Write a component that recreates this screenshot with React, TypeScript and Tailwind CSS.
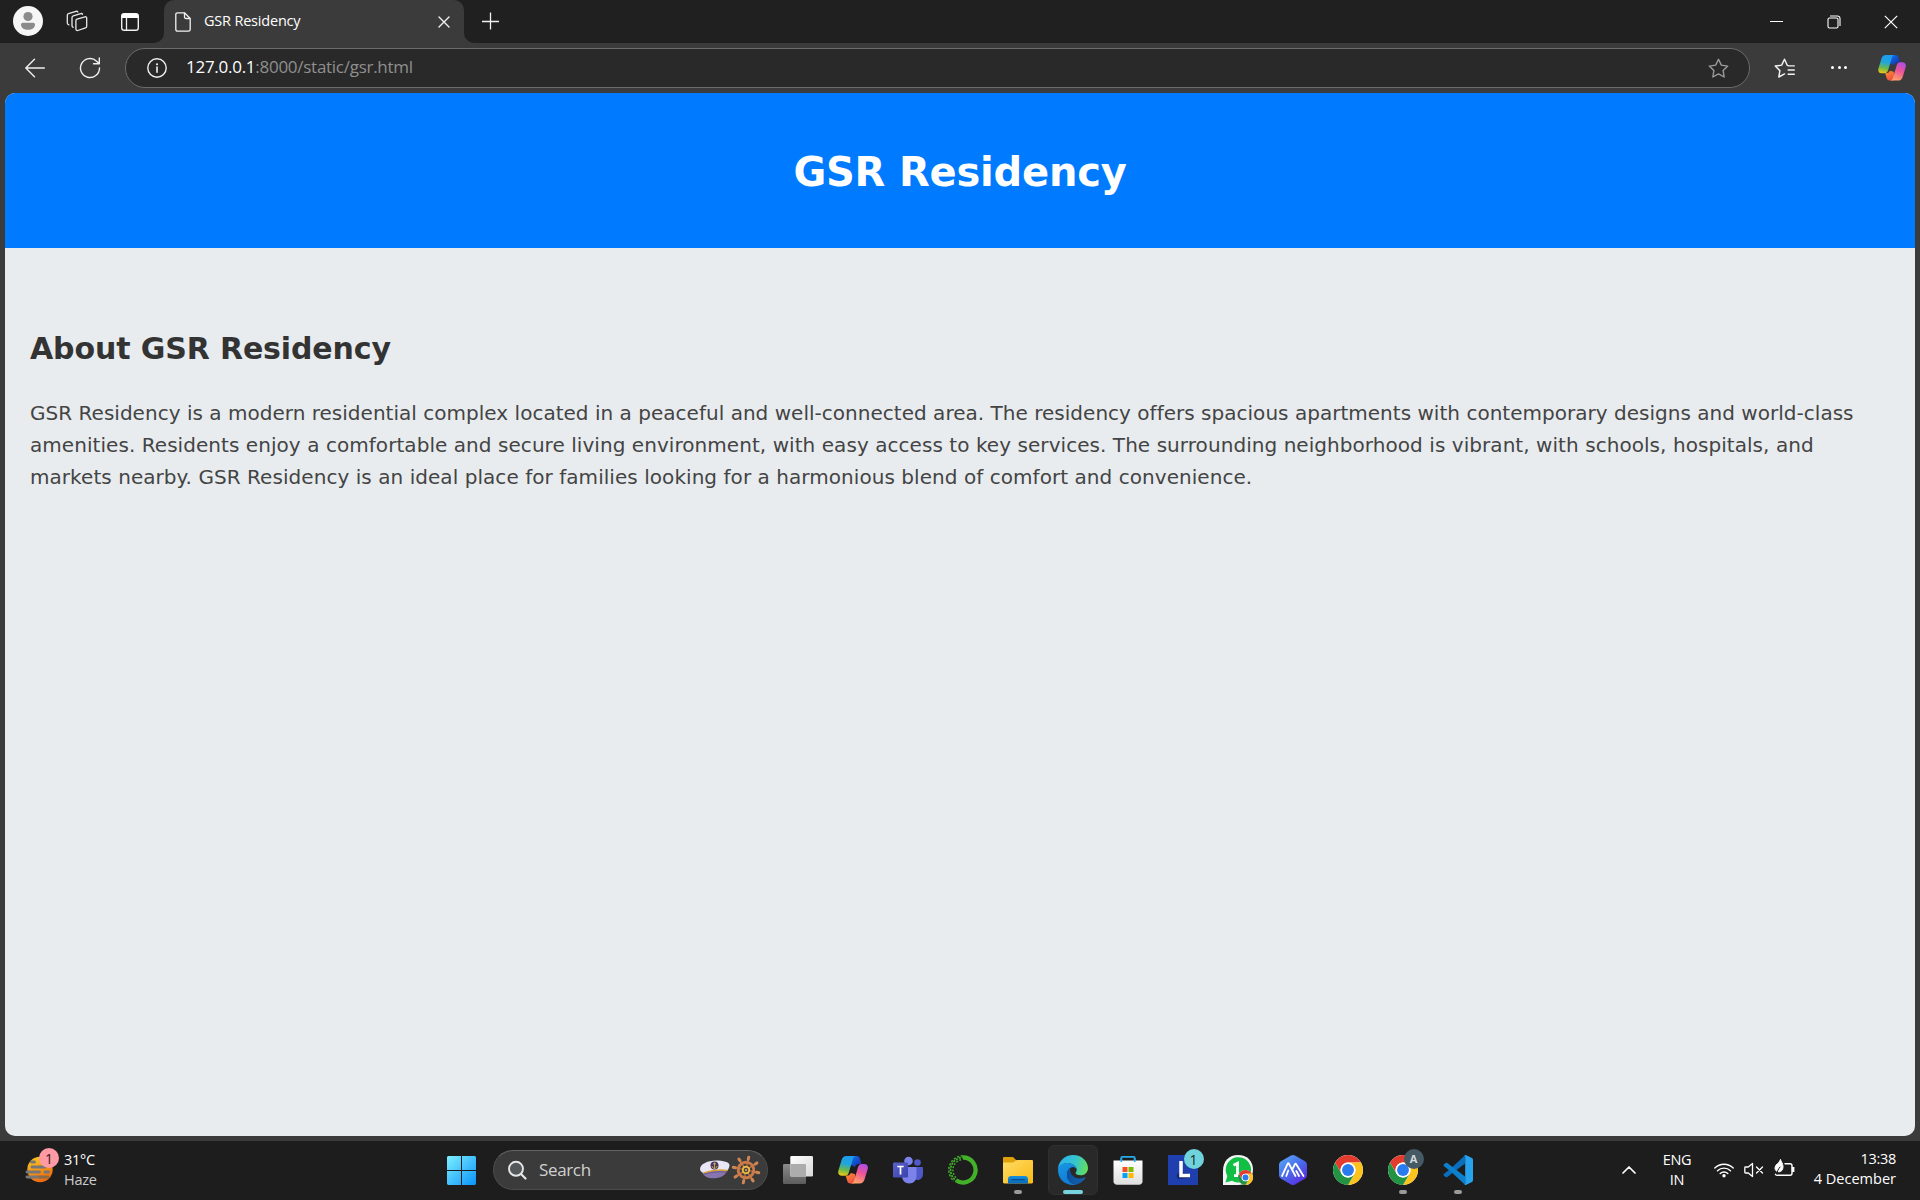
import React from "react";

type IconProps = { className?: string };

function Copilot({ className = "", id }: IconProps & { id: string }) {
  return (
    <svg viewBox="0 0 30 28" className={className} fill="none">
      <defs>
        <linearGradient id={id + "a"} x1="9" y1="0" x2="5" y2="20" gradientUnits="userSpaceOnUse">
          <stop offset="0" stopColor="#1c9bf0" />
          <stop offset=".4" stopColor="#22a6d8" />
          <stop offset=".7" stopColor="#6cb84a" />
          <stop offset="1" stopColor="#f8c912" />
        </linearGradient>
        <linearGradient id={id + "b"} x1="26" y1="7" x2="17" y2="28" gradientUnits="userSpaceOnUse">
          <stop offset="0" stopColor="#a64df0" />
          <stop offset=".45" stopColor="#ee5397" />
          <stop offset="1" stopColor="#ffae62" />
        </linearGradient>
        <linearGradient id={id + "c"} x1="15" y1="0" x2="22" y2="8" gradientUnits="userSpaceOnUse">
          <stop offset="0" stopColor="#0f6fe8" />
          <stop offset="1" stopColor="#1737b8" />
        </linearGradient>
        <linearGradient id={id + "d"} x1="8" y1="19" x2="14" y2="28" gradientUnits="userSpaceOnUse">
          <stop offset="0" stopColor="#f98a2c" />
          <stop offset="1" stopColor="#ef4a4a" />
        </linearGradient>
      </defs>
      <path d="M14 0h4.500c2 0 3 1 3.500 2.700L23.500 8h-2c-2.600 0-3.500.6-4.500 3L13 9l-1-7z" fill={`url(#${id}c)`} />
      <path d="M16 27.500h-3.500c-2 0-2.800-1-3.300-2.700L7.600 19.500H9c2 0 3-.6 3.700-2.500L17 18l1 8z" fill={`url(#${id}d)`} />
      <path d="M8.500 0H18c-2 .3-2.700 1.400-3.200 3.200l-4 13.300c-.7 2.200-1.800 3.200-4 3.200H4C1 19.700-.4 17.500.4 14.600L3.600 4C4.500 1.300 5.800 0 8.500 0z" fill={`url(#${id}a)`} />
      <path d="M21.500 27.500H13c2-.3 2.700-1.400 3.200-3.200l3.800-13c.7-2.200 1.700-3.400 4-3.400h2.200c3 0 4.300 2.300 3.500 5.200l-3.200 10.500c-.9 2.700-2.300 3.900-5 3.900z" fill={`url(#${id}b)`} />
    </svg>
  );
}

function Chrome({ className = "" }: IconProps) {
  return (
    <svg viewBox="0 0 48 48" className={className}>
      <circle cx="24" cy="24" r="24" fill="#fff" />
      <path d="M3.220 12A24 24 0 0 1 44.780 12H24a12 12 0 0 0-10.390 18z" fill="#e33b2e" />
      <path d="M44.780 12A24 24 0 0 1 24 48l10.390-18A12 12 0 0 0 24 12z" fill="#fcc31e" />
      <path d="M24 48A24 24 0 0 1 3.220 12l10.390 18a12 12 0 0 0 20.780 0z" fill="#229342" />
      <circle cx="24" cy="24" r="12" fill="#fff" />
      <circle cx="24" cy="24" r="9.500" fill="#2a7af0" />
    </svg>
  );
}

function Workspaces() {
  return (
    <svg viewBox="0 0 22 22" className="size-[22px]" fill="none" stroke="#e8e8e8" strokeWidth="1.300" strokeLinejoin="round" strokeLinecap="round">
      <path d="M11 9.200l8-2.400c1-.2 1.700.3 1.700 1.300v8.200c0 .8-.4 1.400-1.200 1.600l-7.700 2.600c-1 .3-1.900-.3-1.900-1.400v-8.300c0-.8.400-1.400 1.100-1.600z" />
      <path d="M7.200 17.300c-.7-.3-1.200-.8-1.200-1.500V7.500c0-.8.400-1.400 1.200-1.700l7.600-2.200c.8-.2 1.500.1 1.700.8" />
      <path d="M2.900 14.800c-.9-.2-1.600-.8-1.600-1.700V5.400c0-.9.400-1.500 1.200-1.700L10 1.300c.9-.2 1.500.1 1.800.8" />
    </svg>
  );
}

function TabActions() {
  return (
    <svg viewBox="0 0 20 20" className="size-5" fill="none">
      <rect x="1.700" y="1.700" width="16.600" height="16.600" rx="2.600" stroke="#f0f0f0" strokeWidth="1.400" />
      <path d="M1.500 6V4a2.600 2.600 0 0 1 2.600-2.600h11.800A2.600 2.600 0 0 1 18.500 4v2z" fill="#fff" />
      <path d="M6.500 6v12" stroke="#f0f0f0" strokeWidth="1.300" />
    </svg>
  );
}

const STAR = "M10 1.200l2.700 5.600 6.100.9-4.400 4.300 1 6.100-5.400-2.900-5.400 2.900 1-6.100L1.200 7.700l6.100-.9z";

function TitleBar() {
  return (
    <div className="flex h-[43px] shrink-0 items-start bg-[#202020]">
      <div className="flex h-[42px] w-[154px] items-center">
        <svg viewBox="0 0 30 30" className="ml-[13px] size-[30px]">
          <circle cx="15" cy="15" r="15" fill="#f6f6f6" />
          <circle cx="15" cy="10.500" r="4.600" fill="#8b8b8b" />
          <path d="M8 18.500a1.800 1.800 0 0 1 1.800-1.800h10.400a1.800 1.800 0 0 1 1.800 1.800c0 3.500-3 5.300-7 5.300s-7-1.800-7-5.300z" fill="#8b8b8b" />
        </svg>
        <div className="ml-[23px]"><Workspaces /></div>
        <div className="mt-px ml-8"><TabActions /></div>
      </div>
      <div className="mt-[33px] size-[10px] bg-[#3b3b3b]">
        <div className="size-[10px] rounded-br-[10px] bg-[#202020]" />
      </div>
      <div className="flex h-[43px] w-[300px] items-center rounded-t-[10px] bg-[#3b3b3b]">
        <svg viewBox="0 0 16 20" className="ml-[11px] h-5 w-4 shrink-0" fill="none" stroke="#f2f2f2" strokeWidth="1.300" strokeLinejoin="round">
          <path d="M2.600.8h6.900L15.200 6.500v10.900c0 1-.8 1.800-1.800 1.800H2.600c-1 0-1.800-.8-1.800-1.800V2.600c0-1 .8-1.800 1.800-1.800z" />
          <path d="M9.500.8v4.100c0 1 .6 1.600 1.600 1.600h4.100" />
        </svg>
        <span className="ml-[13px] w-[234px] shrink-0 pb-px text-[14.500px] leading-5 tracking-[-0.200px] whitespace-nowrap text-white">GSR Residency</span>
        <svg viewBox="0 0 12 12" className="mt-px size-3 shrink-0" stroke="#f2f2f2" strokeWidth="1.400" strokeLinecap="round">
          <path d="M1 1l10 10M11 1L1 11" />
        </svg>
      </div>
      <div className="mt-[33px] size-[10px] bg-[#3b3b3b]">
        <div className="size-[10px] rounded-bl-[10px] bg-[#202020]" />
      </div>
      <svg viewBox="0 0 18 18" className="mt-3 ml-2 size-[18px]" stroke="#f2f2f2" strokeWidth="1.300">
        <path d="M8.500 .5v17M0 9.500h17" />
      </svg>
      <div className="mr-px ml-auto flex h-[43px] items-center">
        <div className="flex w-[57px] justify-center">
          <div className="h-px w-[13px] bg-white" />
        </div>
        <div className="flex w-[57px] justify-center">
          <svg viewBox="0 0 14 14" className="size-[14px]" fill="none" stroke="#fff" strokeWidth="1.100">
            <rect x="1" y="3" width="10" height="10" rx="1.500" />
            <path d="M3 1h7.500a2.500 2.500 0 0 1 2.500 2.500V11" />
          </svg>
        </div>
        <div className="flex w-[57px] justify-center">
          <svg viewBox="0 0 14 14" className="size-[14px]" stroke="#fff" strokeWidth="1.200">
            <path d="M.8.800l12.400 12.400M13.200.8L.8 13.200" />
          </svg>
        </div>
      </div>
    </div>
  );
}

function Toolbar() {
  return (
    <div className="flex h-[50px] shrink-0 items-center bg-[#3b3b3b]">
      <svg viewBox="0 0 20 20" className="-mt-px ml-[25px] size-5" fill="none" stroke="#f0f0f0" strokeWidth="1.400" strokeLinecap="round" strokeLinejoin="round">
        <path d="M19.300 10H.8M9.500 1.300L.8 10l8.700 8.700" />
      </svg>
      <svg viewBox="0 0 22 22" className="-mt-px ml-[34px] size-[22px]" fill="none" stroke="#f0f0f0" strokeWidth="1.400" strokeLinecap="round" strokeLinejoin="round">
        <path d="M20.500 11a9.500 9.500 0 1 1-2.900-6.800l2.500 2.300M20.300 1v5.700h-5.800" />
      </svg>
      <div className="ml-[24px] flex h-10 w-[1625px] items-center rounded-full border border-[#6b6b6b] bg-[#292929]">
        <svg viewBox="0 0 20 20" className="ml-[21px] size-5" fill="none">
          <circle cx="10" cy="10" r="9.200" stroke="#f0f0f0" strokeWidth="1.400" />
          <path d="M10 9v5.200" stroke="#fff" strokeWidth="1.500" strokeLinecap="round" />
          <circle cx="10" cy="6.200" r="1" fill="#fff" />
        </svg>
        <span className="ml-[19px] pb-[2px] text-[17px] leading-6 tracking-[-0.270px] whitespace-nowrap text-[#8f8f8f]">
          <span className="text-white">127.0.0.1</span>:8000/static/gsr.html
        </span>
        <svg viewBox="0 0 20 20" className="mr-[20px] ml-auto size-[21px]" fill="none" stroke="#9c9c9c" strokeWidth="1.300" strokeLinejoin="round">
          <path d={STAR} />
        </svg>
      </div>
      <svg viewBox="0 0 20 20" className="ml-6 size-[21px]" fill="none" stroke="#f2f2f2" strokeWidth="1.400" strokeLinejoin="round" strokeLinecap="round">
        <path d="M13 7l-.4-.1L10 1.200 7.300 6.800l-6.100.9L5.600 12l-1 6.100 5.400-2.900M13.700 7.500h5.600M13.500 11.500h5.800M13.500 15.500h5.800" />
      </svg>
      <div className="-mt-px ml-[36px] flex gap-[3.500px]">
        <div className="size-[3px] rounded-full bg-white" />
        <div className="size-[3px] rounded-full bg-white" />
        <div className="size-[3px] rounded-full bg-white" />
      </div>
      <Copilot id="cpt" className="ml-[31px] h-[26px] w-7" />
    </div>
  );
}

function SearchBox() {
  return (
    <div className="flex h-10 w-[275px] shrink-0 items-center rounded-full border border-[#4b4b4b] border-t-[#646464] bg-[#3b3b3b]">
      <svg viewBox="0 0 20 20" className="ml-[13px] size-5" fill="none">
        <circle cx="9" cy="8.800" r="7" fill="#55585a" stroke="#e4e6e8" strokeWidth="1.900" />
        <path d="M14 14l4.500 4.500" stroke="#e4e6e8" strokeWidth="2.200" strokeLinecap="round" />
      </svg>
      <span className="ml-[12px] text-[17px] leading-6 tracking-[-0.350px] text-[#d0d0d0]">Search</span>
      <svg viewBox="0 0 62 30" className="mr-[6px] ml-auto h-[30px] w-[62px]" fill="none">
        <path d="M3 17c7-2 17-3 25-2.500-.5 4.500-4 7.500-10 8.500C11 24 5 22.500 3 17z" fill="#8874ae" />
        <path d="M1 14C1 9 9 5.500 17 5.500c7 0 13.500 1.500 13.500 4.500 0 2-1 4-2 5.500-8-1-17 0-24 2.500C2.500 17 1 16 1 14z" fill="#e9e6f6" />
        <path d="M4.500 18c7-2.500 16-3.800 24-2.500" stroke="#dba536" strokeWidth="1.600" />
        <path d="M5 19.200c7-2.200 15-3 22.500-2" stroke="#6b5894" strokeWidth="1" />
        <circle cx="15.500" cy="10.500" r="4" fill="#453560" />
        <path d="M15.500 7.500v6M13 11c.3 3.300 4.700 3.300 5 0M14 8.800h3" stroke="#ddb047" strokeWidth=".9" />
        <g transform="translate(47 15) rotate(12)" stroke="#c0703f" strokeLinecap="round">
          <path d="M0-12.800V-7M0 7V12.800M-12.800 0H-7M7 0H12.800M-9-9L-5-5M5 5L9 9M9-9L5-5M-5 5L-9 9" strokeWidth="2" />
          <path d="M0-7V7M-7 0H7M-5-5L5 5M5-5L-5 5" strokeWidth="1.300" />
          <path d="M0-13v2M0 11v2M-13 0h2M11 0h2M-9.200-9.200l1.300 1.300M7.900 7.900l1.300 1.300M9.200-9.200L7.900-7.900M-7.900 7.900l-1.300 1.300" strokeWidth="3" stroke="#cd8654" />
          <circle r="7.800" strokeWidth="3" stroke="#c97a49" />
          <circle r="3.200" fill="#4a4036" stroke="#e9b949" strokeWidth="1.800" />
          <circle r="1" fill="#e9b949" stroke="none" />
        </g>
      </svg>
    </div>
  );
}

function Slot({ children, running, active }: { children: React.ReactNode; running?: boolean; active?: boolean }) {
  return (
    <div className="flex h-[50px] w-[55px] shrink-0 justify-center">
      <div className={active ? "relative flex w-[50px] justify-center rounded-md border border-[#303030] bg-[#292929] pt-[9px]" : "relative flex w-[50px] justify-center pt-[10px]"}>
        <div className="relative size-[30px]">{children}</div>
        {running && <div className="absolute bottom-[1px] h-1 w-2 rounded-full bg-[#9a9a9a]" />}
        {active && <div className="absolute bottom-0 h-1 w-5 rounded-full bg-[#76d2dc]" />}
      </div>
    </div>
  );
}

function Apps() {
  return (
    <div className="flex">
      <Slot>
        <svg viewBox="0 0 30 30" className="size-[30px]">
          <defs>
            <linearGradient id="tv" x1="0" y1="0" x2="1" y2="1"><stop stopColor="#fff" /><stop offset="1" stopColor="#d8d8d8" /></linearGradient>
            <linearGradient id="tv2" x1="0" y1="0" x2="0" y2="1"><stop stopColor="#8b8b8b" /><stop offset="1" stopColor="#5c5c5c" /></linearGradient>
          </defs>
          <rect x="0" y="9" width="23" height="20" rx="1.300" fill="url(#tv2)" />
          <rect x="7.300" y="1" width="22.700" height="20.500" rx="1.300" fill="url(#tv)" />
          <path d="M7.300 9H21.700c.8 0 1.300.5 1.300 1.300v11.200H8.600c-.8 0-1.300-.5-1.300-1.300z" fill="#acacac" />
        </svg>
      </Slot>
      <Slot><Copilot id="cpb" className="mt-px h-7 w-[30px]" /></Slot>
      <Slot>
        <svg viewBox="0 0 30 30" className="size-[30px]">
          <defs><linearGradient id="tm" x1="0" y1="0" x2="1" y2="1"><stop stopColor="#5a62c9" /><stop offset="1" stopColor="#3b43ab" /></linearGradient></defs>
          <circle cx="24.500" cy="7.500" r="3.300" fill="#5059c9" />
          <circle cx="15.500" cy="6" r="4.300" fill="#7b83eb" />
          <path d="M20 12h8.800c.7 0 1.200.5 1.200 1.200V19c0 3.500-2.500 6-5.500 6S20 23 20 20z" fill="#4f58c8" />
          <path d="M9 12h13.300c.7 0 1.200.5 1.200 1.200V21c0 4.500-3 7.500-7.200 7.500S9 25.500 9 21z" fill="#7b83eb" />
          <rect y="7.500" width="15" height="15" rx="1.300" fill="url(#tm)" />
          <path d="M4.300 11.500h6.400M7.500 11.500v8" stroke="#fff" strokeWidth="1.700" />
        </svg>
      </Slot>
      <Slot>
        <svg viewBox="0 0 30 30" className="size-[30px]" fill="none" stroke="#43b02a">
          <path d="M15 2.500a12.500 12.500 0 1 1-7 22.800" strokeWidth="4.300" />
          <path d="M15 2.500A12.500 12.500 0 0 0 8 25.300" strokeWidth="1.700" strokeDasharray="2.200 1" strokeDashoffset="1" />
          <path d="M15 .8A14.200 14.200 0 0 0 6 26" strokeWidth="1.400" strokeDasharray="2.300 1.500" />
          <path d="M13 4.700A10.700 10.700 0 0 0 9 23.500" strokeWidth="1.400" strokeDasharray="1.800 1.600" />
        </svg>
      </Slot>
      <Slot running>
        <svg viewBox="0 0 30 30" className="size-[30px]">
          <defs>
            <linearGradient id="fo" x1="0" y1="0" x2="1" y2="1"><stop stopColor="#ffdc66" /><stop offset="1" stopColor="#fbb914" /></linearGradient>
            <linearGradient id="fb" x1="0" y1="0" x2="0" y2="1"><stop stopColor="#168fdf" /><stop offset="1" stopColor="#0867b7" /></linearGradient>
          </defs>
          <path d="M0 3.200C0 2.500.5 2 1.200 2h8c.7 0 1.200.2 1.700.7L13 5v6H0z" fill="#e0a008" />
          <path d="M0 7.500h9.500c.8 0 1.300-.2 1.800-.7l1.200-1.100c.4-.4.8-.6 1.500-.6h14.800c.7 0 1.200.5 1.200 1.200v20.900c0 .7-.5 1.200-1.200 1.200H1.200C.5 28.400 0 27.900 0 27.200z" fill="url(#fo)" />
          <path d="M5 28.500V24c0-2 1.300-3 3-3h14c1.700 0 3 1 3 3v4.500z" fill="url(#fb)" />
          <path d="M8.700 24.700h12.600" stroke="#064d8f" strokeWidth="1.200" strokeLinecap="round" />
        </svg>
      </Slot>
      <Slot active>
        <svg viewBox="0 0 30 30" className="size-[30px]">
          <defs>
            <linearGradient id="e1" x1="2" y1="6" x2="30" y2="14" gradientUnits="userSpaceOnUse"><stop stopColor="#2bb3ea" /><stop offset=".5" stopColor="#35c5d0" /><stop offset="1" stopColor="#65e054" /></linearGradient>
            <linearGradient id="e2" x1="4" y1="10" x2="14" y2="30" gradientUnits="userSpaceOnUse"><stop stopColor="#1793e0" /><stop offset="1" stopColor="#0f78d4" /></linearGradient>
            <linearGradient id="e3" x1="9" y1="20" x2="27" y2="24" gradientUnits="userSpaceOnUse"><stop stopColor="#0c4f9e" /><stop offset="1" stopColor="#1462ac" /></linearGradient>
          </defs>
          <path d="M0 14C.5 6 7 0 15 0c8.800 0 15 6.300 15 13 0 4.500-3.300 7.300-7.200 7.300-3.500 0-5.300-1-5.300-2.200 0-.8 1.200-1.200 1.200-3.300 0-3.500-4-6.600-9.200-6.600C5.500 8.200 2 10 0 14z" fill="url(#e1)" />
          <path d="M0 14c1-4 5-6 9.500-6 5 0 9 3 9.200 6.500-.7-1.500-2.200-2.500-3.700-2.500-3.500 0-6 3.800-6 7.500 0 5.500 4 10 9.500 10-1 .4-2.300.5-3.500.5C6.500 30 0 23.500 0 15z" fill="url(#e2)" />
          <path d="M12.300 13c-2.600 1.600-3.800 5-3.300 8.200.6 4.500 5 8.300 9.600 8.300 3.500-1 6.700-3.200 8.700-6.200.4-.7-.2-1.200-.9-.8-7 3.500-15.700-2-14.100-9.500z" fill="url(#e3)" />
        </svg>
      </Slot>
      <Slot>
        <svg viewBox="0 0 30 30" className="size-[30px]">
          <defs><linearGradient id="st" x1="0" y1="0" x2="0" y2="1"><stop stopColor="#fff" /><stop offset="1" stopColor="#dedede" /></linearGradient></defs>
          <path d="M8.300 7V2.800c0-.6.300-.9.900-.9h11.600c.6 0 .9.300.9.900V7" fill="none" stroke="#27abe8" strokeWidth="1.700" />
          <path d="M.5 5.500h29v20.700c0 2-1.500 3.500-3.500 3.500H4c-2 0-3.500-1.500-3.500-3.500z" fill="url(#st)" />
          <path d="M8.300 7V3M21.700 7V3" fill="none" stroke="#27abe8" strokeWidth="1.700" />
          <path d="M9.500 12h5v5h-5z" fill="#f25022" /><path d="M15.500 12h5v5h-5z" fill="#7fba00" />
          <path d="M9.500 18h5v5h-5z" fill="#00a4ef" /><path d="M15.500 18h5v5h-5z" fill="#ffb900" />
        </svg>
      </Slot>
      <Slot>
        <svg viewBox="0 0 30 30" className="size-[30px]">
          <path d="M0 0h30v30H0z" fill="#1f3fae" />
          <path d="M8.500 20l4-4 9 4v3l-12 1z" fill="#152a6c" />
          <path d="M13 6v14.500h9" fill="none" stroke="#fff" strokeWidth="3.500" />
        </svg>
        <div className="absolute -top-[6px] left-4 flex size-5 items-center justify-center rounded-full bg-[#70d3dc] text-[14px] text-[#1c2b2d]">1</div>
      </Slot>
      <Slot>
        <svg viewBox="0 0 30 30" className="size-[30px]">
          <path d="M0 30V16C0 6 6 0 15 0s15 6 15 14.500S24 30 15 30z" fill="#f4f4f4" />
          <path d="M2.500 27.500l1.800-6.500A12.700 12.700 0 1 1 9 25.800z" fill="#11bf45" />
          <path d="M10.500 10.300l4-2v12.300M11 20.700h7" fill="none" stroke="#fff" strokeWidth="2.800" />
        </svg>
        <div className="absolute top-[15px] left-[15px] size-[15px]"><Chrome className="size-[15px]" /></div>
      </Slot>
      <Slot>
        <svg viewBox="0 0 30 30" className="size-[30px]" fill="none">
          <defs><linearGradient id="hx" x1="4" y1="3" x2="24" y2="28" gradientUnits="userSpaceOnUse"><stop stopColor="#55a1f6" /><stop offset=".5" stopColor="#4a69ea" /><stop offset="1" stopColor="#5a2be0" /></linearGradient></defs>
          <path d="M13 .6a4 4 0 0 1 4 0l10 5.700a4 4 0 0 1 2 3.500v10.400a4 4 0 0 1-2 3.500l-10 5.700a4 4 0 0 1-4 0L3 23.700a4 4 0 0 1-2-3.500V9.800a4 4 0 0 1 2-3.500z" fill="url(#hx)" />
          <path d="M4 21l5.700-12.300c.3-.6.900-.6 1.200 0L17.500 21M10.300 15.500L8.300 21M14 15l3-5.800c.3-.6.900-.6 1.200 0L25.500 21M18.300 16l2.700 5" stroke="#fff" strokeWidth="1.800" strokeLinecap="round" strokeLinejoin="round" />
        </svg>
      </Slot>
      <Slot><Chrome className="size-[30px]" /></Slot>
      <Slot running>
        <Chrome className="size-[30px]" />
        <div className="absolute -top-[6px] left-4 flex size-5 items-center justify-center rounded-full bg-[#455a64] text-[11px] font-bold text-[#d3dade]">A</div>
      </Slot>
      <Slot running>
        <svg viewBox="0 0 30 30" className="size-[30px]">
          <path d="M22 .3L7.800 13.500.8 19a1 1 0 0 0 0 1.400L2.600 22a1.300 1.300 0 0 0 1.700 0L22 8.500z" fill="#0a6ebd" />
          <path d="M22 29.700L7.800 16.500.8 11a1 1 0 0 1 0-1.400L2.600 8a1.300 1.300 0 0 1 1.700 0L22 21.500z" fill="#0c80cc" />
          <path d="M21.500 29.800c.6.300 1.200.2 1.800-.1l5.700-2.800c.6-.3 1-.9 1-1.600V4.700c0-.7-.4-1.300-1-1.600L23.300.3c-.6-.3-1.300-.3-1.800-.1.400.2.700.6.700 1.300v27c0 .7-.3 1.100-.7 1.300z" fill="#27a3ee" />
        </svg>
      </Slot>
    </div>
  );
}

function Tray() {
  return (
    <div className="ml-auto flex h-[50px] items-center text-[14.500px] leading-5 tracking-[-0.300px] text-white">
      <svg viewBox="0 0 14 8" className="h-2 w-[14px]" fill="none" stroke="#fff" strokeWidth="1.700" strokeLinecap="round" strokeLinejoin="round">
        <path d="M1 7l6-6 6 6" />
      </svg>
      <div className="ml-[22px] w-[38px] text-center">
        <div>ENG</div>
        <div>IN</div>
      </div>
      <svg viewBox="0 0 20 16" className="-mt-px ml-[18px] h-4 w-5" fill="none" stroke="#fff" strokeWidth="1.400" strokeLinecap="round">
        <path d="M.8 6A13 13 0 0 1 19.200 6M3.500 8.800a9.300 9.300 0 0 1 13 0M6.200 11.500a5.400 5.400 0 0 1 7.600 0" />
        <circle cx="10" cy="13.700" r="1.700" fill="#fff" stroke="none" />
      </svg>
      <svg viewBox="0 0 20 16" className="-mt-px ml-[10px] h-4 w-5" fill="none" stroke="#fff" strokeWidth="1.300" strokeLinejoin="round" strokeLinecap="round">
        <path d="M8.500 1.500v13L4.300 11H1.500c-.4 0-.7-.3-.7-.7V5.700c0-.4.300-.7.700-.7h2.800zM12.500 5l6 6M18.500 5l-6 6" />
      </svg>
      <svg viewBox="0 0 21 18" className="-mt-[4px] ml-[10px] h-[18px] w-[21px]" fill="none" stroke="#fff" strokeWidth="1.400" strokeLinecap="round">
        <path d="M11 4.700h5c1.300 0 2 .7 2 2v7.600c0 1.300-.7 2-2 2H3.500c-1 0-1.600-.3-2-1" />
        <path d="M18.500 8.700h1.200v3.600h-1.200z" fill="#fff" />
        <path d="M6.500.8C7.300 3 9 4.500 9 8c0 3-1.800 4.800-4 4.800C2.500 12.800 1 11.300 1 9c0-4 4-4 5.500-8.200z" fill="#fff" strokeWidth="1" />
        <path d="M3 15c0-3 1.500-5 3-7" stroke="#1d1d1d" strokeWidth="1" />
      </svg>
      <div className="mr-6 -mt-[2px] ml-[18px] w-[83px] text-right whitespace-nowrap">
        <div>13:38</div>
        <div className="tracking-[0.020px]">4 December</div>
      </div>
    </div>
  );
}

function Taskbar() {
  return (
    <div className="flex h-[59px] shrink-0 items-center bg-[#1d1d1d] pb-px">
      <div className="flex w-[447px] shrink-0 items-center">
        <div className="relative ml-[25px] h-[40px] w-[34px]">
          <svg viewBox="0 0 34 40" className="h-10 w-[34px]">
            <defs><linearGradient id="sun" x1="0" y1="0" x2=".4" y2="1"><stop stopColor="#fbd021" /><stop offset="1" stopColor="#ef6c10" /></linearGradient></defs>
            <circle cx="15" cy="19.500" r="12.700" fill="url(#sun)" />
            <path d="M6.500 12h3M7 17h13M2 22h12.500M20 22h3.500M2 27h13" stroke="#777" strokeWidth="2.900" strokeLinecap="round" />
            <path d="M15 27h8" stroke="#8b6a44" strokeWidth="2.900" strokeLinecap="round" />
          </svg>
          <div className="absolute -top-[2px] left-[14px] flex size-5 items-center justify-center rounded-full bg-[#ff99a4] text-[14px] text-[#33191c]">1</div>
        </div>
        <div className="-mt-px ml-[5px] text-[14.500px] leading-5 tracking-[-0.300px]">
          <div className="text-white">31°C</div>
          <div className="text-[#cbcbcb]">Haze</div>
        </div>
      </div>
      <svg viewBox="0 0 29 29" className="size-[29px] shrink-0">
        <defs><linearGradient id="win" x1="0" y1="0" x2="29" y2="29" gradientUnits="userSpaceOnUse"><stop stopColor="#7df0ff" /><stop offset="1" stopColor="#0a93fb" /></linearGradient></defs>
        <path d="M1 0h13v14H0V1zM15 0h13l1 1v13H15zM0 15h14v14H1l-1-1zM15 15h14v13l-1 1H15z" fill="url(#win)" />
      </svg>
      <div className="ml-[17px]"><SearchBox /></div>
      <div className="ml-[2px]"><Apps /></div>
      <Tray />
    </div>
  );
}

export default function App() {
  return (
    <div className="flex h-[1200px] w-[1920px] flex-col overflow-hidden bg-[#3b3b3b] font-['Open_Sans','Noto_Sans',sans-serif]">
      <TitleBar />
      <Toolbar />
      <main className="mx-[5px] flex h-[1043px] shrink-0 flex-col overflow-hidden rounded-[10px] bg-[#e8ecef] font-['DejaVu_Sans',Verdana,sans-serif]">
        <header className="flex h-[155px] items-center justify-center bg-[#007bff] pt-[2px]">
          <h1 className="text-[40px] leading-[48px] font-bold tracking-[-0.200px] text-white">GSR Residency</h1>
        </header>
        <section className="px-[25px] pt-[83px]">
          <h2 className="text-[30px] leading-9 font-bold tracking-[-0.130px] text-[#333]">About GSR Residency</h2>
          <p className="mt-[30px] text-[20px] leading-8 whitespace-nowrap text-[#444]">
            <span className="tracking-[0.021px]">GSR Residency is a modern residential complex located in a peaceful and well-connected area. The residency offers spacious apartments with contemporary designs and world-class</span>
            <br />
            <span className="tracking-[0.056px]">amenities. Residents enjoy a comfortable and secure living environment, with easy access to key services. The surrounding neighborhood is vibrant, with schools, hospitals, and</span>
            <br />
            <span className="tracking-[0.051px]">markets nearby. GSR Residency is an ideal place for families looking for a harmonious blend of comfort and convenience.</span>
          </p>
        </section>
      </main>
      <div className="h-[5px] shrink-0 bg-[#3b3b3b]" />
      <Taskbar />
    </div>
  );
}
